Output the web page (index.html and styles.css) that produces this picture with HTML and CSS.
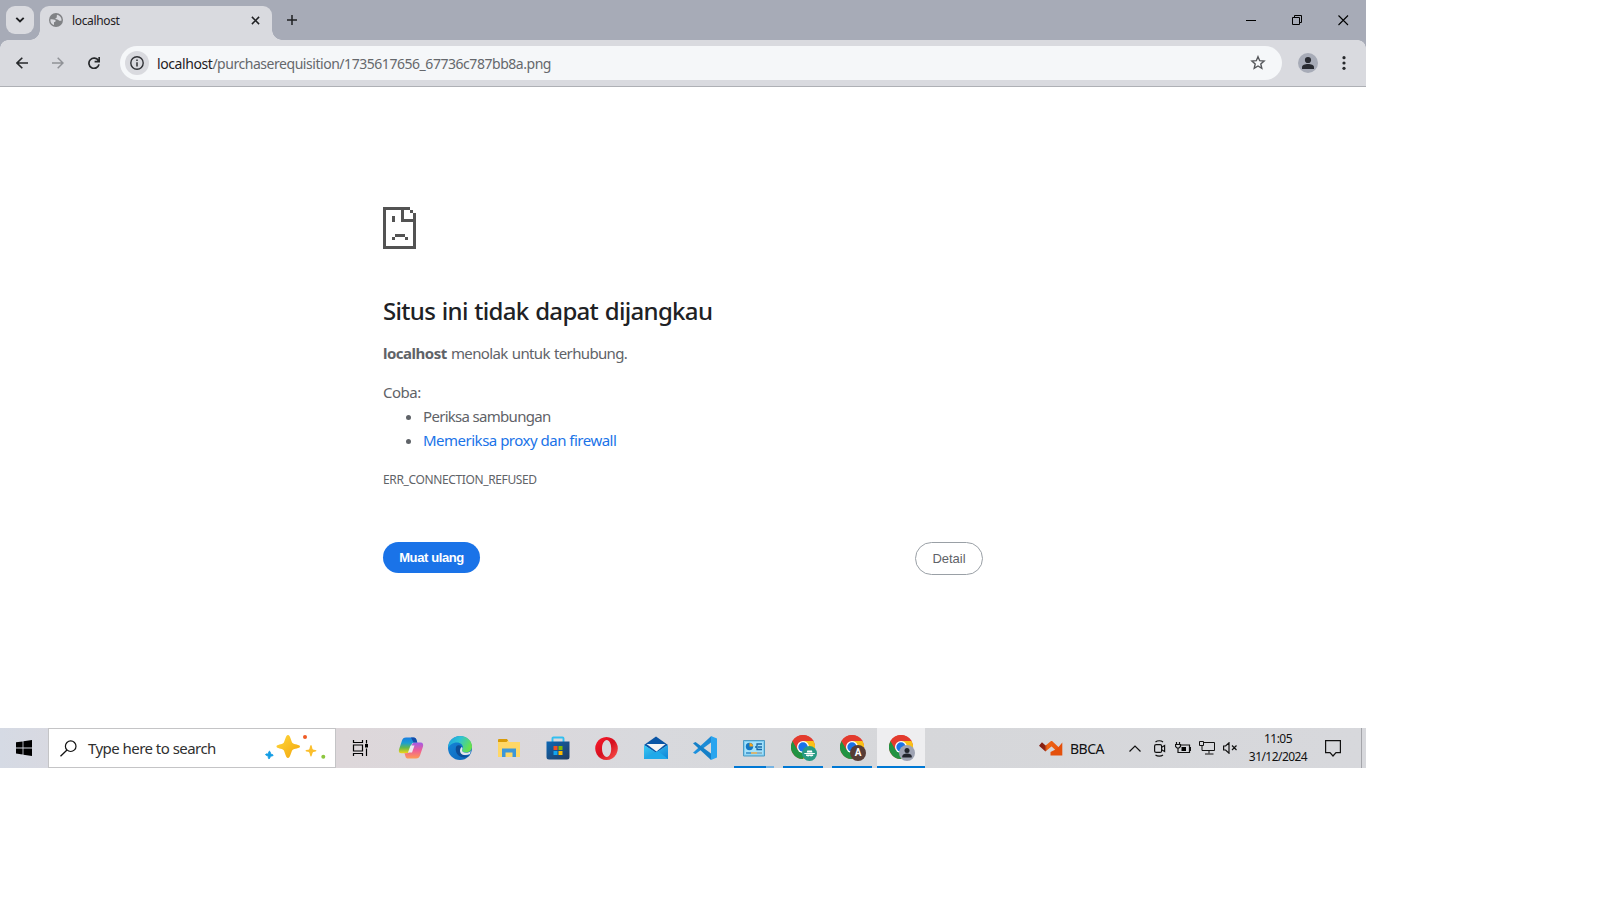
FILE: index.html
```html
<!DOCTYPE html>
<html lang="id">
<head>
<meta charset="utf-8">
<title>localhost</title>
<link rel="stylesheet" href="styles.css">
</head>
<body>
<svg class="defs" width="0" height="0">
  <defs>
    <symbol id="chrome" viewBox="0 0 24 24">
      <circle cx="12" cy="12" r="12" fill="#e33b2e"/>
      <path d="M1.600 6A12 12 0 0 0 12 24l5.200-9L12 12 6.800 15z" fill="#229342"/>
      <path d="M12 24A12 12 0 0 0 22.400 6H12l5.200 9z" fill="#fbc116"/>
      <path d="M1.600 6A12 12 0 0 1 22.400 6H12L6.800 15z" fill="#e33b2e"/>
      <circle cx="12" cy="12" r="6" fill="#fff"/>
      <circle cx="12" cy="12" r="4.700" fill="#1a73e8"/>
    </symbol>
    <linearGradient id="gold" x1="0" y1="0" x2="1" y2="1"><stop offset="0" stop-color="#ffd83b"/><stop offset="1" stop-color="#f2a50c"/></linearGradient>
    <linearGradient id="cpA" x1="0" y1="0" x2="0" y2="1"><stop offset="0" stop-color="#1a7ee0"/><stop offset=".35" stop-color="#1b9ed2"/><stop offset=".65" stop-color="#66b84a"/><stop offset="1" stop-color="#f6d516"/></linearGradient>
    <linearGradient id="cpB" x1="0" y1="0" x2="0" y2="1"><stop offset="0" stop-color="#a25be8"/><stop offset=".5" stop-color="#ee5f96"/><stop offset="1" stop-color="#ff9a52"/></linearGradient>
    <linearGradient id="edA" x1="0" y1="0" x2="1" y2=".4"><stop offset="0" stop-color="#1b9de2"/><stop offset=".5" stop-color="#2fc3d2"/><stop offset="1" stop-color="#66e04e"/></linearGradient>
    <linearGradient id="edB" x1="0" y1="0" x2="1" y2="1"><stop offset="0" stop-color="#1688da"/><stop offset="1" stop-color="#0c62b8"/></linearGradient>
    <linearGradient id="st" x1="0" y1="0" x2="1" y2="1"><stop offset="0" stop-color="#0b67b5"/><stop offset="1" stop-color="#243a5e"/></linearGradient>
    <linearGradient id="op" x1="0" y1="0" x2="1" y2="1"><stop offset="0" stop-color="#ff1b2d"/><stop offset=".5" stop-color="#d5101f"/><stop offset="1" stop-color="#ff5a4f"/></linearGradient>
    <linearGradient id="ml" x1="0" y1="0" x2="1" y2="1"><stop offset="0" stop-color="#38cbf5"/><stop offset="1" stop-color="#1182d6"/></linearGradient>
    <linearGradient id="vs" x1="0" y1="0" x2="0" y2="1"><stop offset="0" stop-color="#1c86cf"/><stop offset="1" stop-color="#1b92e0"/></linearGradient>
    <linearGradient id="bb" gradientUnits="userSpaceOnUse" x1="0" y1="0" x2="20" y2="0"><stop offset="0" stop-color="#7c1a12"/><stop offset=".28" stop-color="#8f2412"/><stop offset=".4" stop-color="#ee6415"/><stop offset="1" stop-color="#e9560f"/></linearGradient>
  </defs>
</svg>
<div class="screen">
  <header class="tabstrip">
    <button class="tab-search" aria-label="Tabs"><svg width="10" height="8" viewBox="0 0 10 8"><path d="M1.300 1.800 5 5.500 8.700 1.800" fill="none" stroke="#1f2023" stroke-width="1.900"/></svg></button>
    <div class="tab">
      <svg width="14" height="14" viewBox="0 0 14 14"><circle cx="7" cy="7" r="7" fill="#808285"/><path d="M1.500 6.200c1.800 0 4.300 0 5 1.100.7 1-.3 1.700-1.500 1.900v2.700C2.800 11.500 1 9 1.500 6.200zM8.500 1.700c2.600.8 4.300 3.200 4.100 5.800-1.200.5-2.600.5-3.200-.5-.5-.8-1.500-.5-2.500-.8-.8-.3-.4-1.300.5-1.500.9-.3.300-1.200.300-1.700 0-.6.300-1 .8-1.300z" fill="#d9dadf"/></svg>
      <span class="tab-title">localhost</span>
      <svg class="tab-close" width="9" height="9" viewBox="0 0 9 9"><path d="m.9.9 7.200 7.200M8.100.9.9 8.100" stroke="#1f2023" stroke-width="1.500"/></svg>
    </div>
    <svg class="new-tab" width="10" height="10" viewBox="0 0 10 10"><path d="M5 0v10M0 5h10" stroke="#1f2023" stroke-width="1.500"/></svg>
    <div class="window-controls">
      <svg width="11" height="11" viewBox="0 0 11 11"><path d="M0 5.500h10" stroke="#000"/></svg>
      <svg width="11" height="11" viewBox="0 0 11 11"><path d="M.5 2.500h7v7h-7zM2.500 2.500v-2h7v7h-2" fill="none" stroke="#000"/></svg>
      <svg width="11" height="11" viewBox="0 0 11 11"><path d="m.5.5 9.500 9.500m0-9.500-9.500 9.500" stroke="#000" stroke-width="1.100"/></svg>
    </div>
  </header>
  <nav class="toolbar">
    <svg width="12" height="12" viewBox="0 0 12 12"><path d="M12 6H1M6.300.7 1 6l5.300 5.300" fill="none" stroke="#26282b" stroke-width="1.600"/></svg>
    <svg width="12" height="12" viewBox="0 0 12 12"><path d="M0 6h11M5.700.7 11 6l-5.300 5.300" fill="none" stroke="#909297" stroke-width="1.500"/></svg>
    <svg width="12" height="12" viewBox="0 0 12 12"><path d="M10.400 3.600A5.100 5.100 0 1 0 11 7.400M11.200 0v4.600H6.600" fill="none" stroke="#26282b" stroke-width="1.700"/></svg>
    <div class="omnibox">
      <span class="site-info"><svg width="14" height="14" viewBox="0 0 14 14"><circle cx="7" cy="7" r="6.200" fill="none" stroke="#303236" stroke-width="1.400"/><path d="M7 6.200v4.200M7 3.400v1.500" stroke="#303236" stroke-width="1.500"/></svg></span>
      <span class="url"><b>localhost</b>/purchaserequisition/1735617656_67736c787bb8a.png</span>
      <svg class="star" width="16" height="15" viewBox="0 0 16 15"><path d="m8 1.700 1.700 4 4.400.4-3.300 2.900 1 4.300L8 11l-3.800 2.300 1-4.300L1.900 6.100l4.400-.4z" fill="none" stroke="#55575b" stroke-width="1.400"/></svg>
    </div>
    <svg class="avatar" width="20" height="20" viewBox="0 0 20 20"><circle cx="10" cy="10" r="10" fill="#a7abb7"/><circle cx="10" cy="7" r="3.100" fill="#282a30"/><path d="M4 16v-1.600C4 12 7 11 10 11s6 1 6 3.400V16z" fill="#282a30"/></svg>
    <svg class="menu" width="4" height="14" viewBox="0 0 4 14"><g fill="#26282b"><circle cx="2" cy="1.700" r="1.600"/><circle cx="2" cy="7" r="1.600"/><circle cx="2" cy="12.300" r="1.600"/></g></svg>
  </nav>
  <main class="error-page">
    <svg class="sad" width="33" height="42" viewBox="0 0 33 42" shape-rendering="crispEdges"><path fill="#535353" d="M0 0h27v3h-6v9h9V6h3v36H0zM3 3v36h27V15H18V3zM27 3h3v3h-3zM9 9h3v6H9zM12 27h10v3H12zM9 30h3v3H9zM22 30h3v3h-3z" fill-rule="evenodd"/></svg>
    <h1>Situs ini tidak dapat dijangkau</h1>
    <p class="summary"><b>localhost</b> menolak untuk terhubung.</p>
    <p class="try">Coba:</p>
    <ul>
      <li><span class="check">Periksa sambungan</span></li>
      <li><a>Memeriksa proxy dan firewall</a></li>
    </ul>
    <div class="code">ERR_CONNECTION_REFUSED</div>
    <div class="buttons">
      <button class="reload">Muat ulang</button>
      <button class="details">Detail</button>
    </div>
  </main>
  <footer class="taskbar">
    <div class="start"><svg width="16" height="16" viewBox="0 0 16 16"><path d="M0 2.300 6.600 1.400v6.100H0zM7.400 1.300 16 0v7.500H7.400zM0 8.400h6.600v6.100L0 13.600zM7.400 8.400H16V16l-8.600-1.300z"/></svg></div>
    <div class="search">
      <svg width="17" height="17" viewBox="0 0 17 17"><circle cx="10.700" cy="6.200" r="5.300" fill="none" stroke="#111" stroke-width="1.200"/><path d="m7 10-6.500 6.300" stroke="#111" stroke-width="1.300"/></svg>
      <span class="search-text">Type here to search</span>
      <svg class="sparkle" width="62" height="26" viewBox="0 0 62 26">
        <path d="M24 0c2.500 0 3 6.500 4.500 8s7.500 1.500 7.500 3.500-6 2-7.500 3.500-2 8-4.500 8-3-6.500-4.500-8-7-1.500-7-3.500 5.500-2 7-3.500 2-8 4.500-8z" fill="url(#gold)"/>
        <path d="M47 10c1 0 1 3.500 1.800 4.300s3.700.5 3.700 1.500-3 .8-3.700 1.600S48 21.500 47 21.500s-1-3.300-1.800-4.100-3.700-.6-3.700-1.600 3-.7 3.700-1.500S46 10 47 10z" fill="#fbbf2d"/>
        <path d="M5.500 16.300c1 .1.800 2.100 1.200 2.600s2.500.5 2.400 1.400-2.200.6-2.600 1-.7 2.700-1.600 2.500-.4-2.200-.8-2.700-2.700-.8-2.500-1.600 2.200-.2 2.600-.7.400-2.600 1.300-2.500z" fill="#139de5" stroke="#139de5"/>
        <circle cx="41" cy="2" r="2" fill="#ef5b25"/><circle cx="59.300" cy="21.700" r="2" fill="#8cc63e"/>
      </svg>
    </div>
    <div class="task-view"><svg width="17" height="16" viewBox="0 0 17 16"><path d="M1.500 0v2.500h9V0M1.500 16v-2.500h9V16M1.500 5h9v6h-9zM14.500 0v3.500M14.500 8.500V16" fill="none" stroke="#000" stroke-width="1.200"/><path d="M13 4h3v3.500h-3z"/></svg></div>
    <div class="app"><svg width="26" height="22" viewBox="0 0 26 22"><path d="M8 .5h7.500c2 0 2.500 1 3 2.500l.8 2.500h-2.500c-2 0-3 .8-3.500 2.500l-2 6c-.6 1.700-1.300 2.300-3 2.300H3.500C1 16.300.5 14.500 1 12.500l3-9C4.700 1.500 5.600.5 8 .5z" fill="url(#cpA)"/><path d="M18 21.500h-7.500c-2 0-2.600-.6-3-2l-1-3.200h2c2 0 3-.8 3.500-2.500l2-6c.6-1.700 1.500-2.300 3-2.300h5.500c2.500 0 3 1.800 2.500 4l-3 9c-.7 2-1.700 3-4 3z" fill="url(#cpB)"/><path d="M12.500 8.500h4l-2.500 7h-4z" fill="#eceaf0"/><path d="M13 .5h2.500c2 0 2.500 1 3 2.500l.8 2.500h-3.800z" fill="#154ca8"/></svg></div>
    <div class="app"><svg width="24" height="24" viewBox="0 0 24 24"><circle cx="12" cy="12" r="12" fill="url(#edB)"/><path d="M0 12C0 5 5.500 0 12 0c7 0 12 5 12 10.500 0 3.700-2.800 6-6 6-2.500 0-4-1-4-2 0-.8 1-1.200 1-3C15 9 12.500 6.500 9 6.500 4.500 6.500 1.500 9 0 12z" fill="url(#edA)"/><path d="M8.500 10c-2 4 0 9.500 5 11 3 1 6.500.3 8.500-2-3.500 1.500-8 .5-9.500-3-1-2.300 0-4 1-5.500C12 9 9.800 8.800 8.500 10z" fill="#0d4d96"/><path d="M14 11c1.200 1.300 0 2.700 0 3.500 0 1.200 1.500 2.200 4 2.200 2 0 3.600-.6 4.800-1.800l-.8 3c-3.500 2-8.800 1.500-9.800-2-.7-2.300.7-4.500 1.800-4.900z" fill="#e4e5ea"/></svg></div>
    <div class="app"><svg width="22" height="20" viewBox="0 0 22 20"><path d="M0 2h10l1 2h11v15H0z" fill="#ffd766"/><path d="M0 1.500 1 1h8l1 1.500L8.500 4H0z" fill="#d99b08"/><path d="M4 10.500h14V19h-3.500v-4.500h-7V19H4z" fill="#3d97d9"/></svg></div>
    <div class="app"><svg width="24" height="24" viewBox="0 0 24 24"><path d="M6.500 7V2.500Q6.500 1.500 7.500 1.500h9q1 0 1 1V7" fill="none" stroke="#32bff0" stroke-width="1.900"/><path d="M.5 5.500h23V21a2.500 2.500 0 0 1-2.500 2.500H3A2.500 2.500 0 0 1 .5 21z" fill="url(#st)"/><path d="M7.500 10h4v4h-4z" fill="#f25022"/><path d="M12.500 10h4v4h-4z" fill="#7fba00"/><path d="M7.500 15h4v4h-4z" fill="#13a4ee"/><path d="M12.500 15h4v4h-4z" fill="#ffb900"/></svg></div>
    <div class="app"><svg width="23" height="23" viewBox="0 0 23 23"><path d="M11.500 0a11.300 11.500 0 1 0 .01 0zm.3 3c2.500 0 4.400 3.600 4.400 8.500s-1.900 8.500-4.400 8.500-4.800-3.600-4.800-8.500 2.300-8.500 4.800-8.500z" fill="url(#op)" fill-rule="evenodd"/></svg></div>
    <div class="app"><svg width="24" height="24" viewBox="0 0 24 24"><path d="M0 9 12 .5 24 9l-12 8z" fill="#0a55a5"/><path d="M0 9l12 7.500L24 9v14H0z" fill="url(#ml)"/><path d="M0 23 14 15l10 8z" fill="#1fa9ea"/><path d="M2.500 8h19L12.500 15.500z" fill="#f5f4f4"/></svg></div>
    <div class="app"><svg width="24" height="24" viewBox="0 0 24 24"><path d="M0 16.700 18 .3V6.500L2.500 18z" fill="url(#vs)"/><path d="m0 7.300 2.500-1.300L18 17.500V24z" fill="#1580c8"/><path d="m18 0 6 2.500v19L18 24z" fill="#2aa5ef"/></svg></div>
    <div class="app running short"><svg width="22" height="17" viewBox="0 0 22 17"><path d="M.5.500h21v15.500H.5z" fill="#80cdf2" stroke="#4b9bc4"/><path d="M2 2h18v12.500H2z" fill="#a5e1fa"/><circle cx="6.500" cy="6.500" r="3.700" fill="#1377c4"/><path d="M6.500 6.500V3a3.600 3.600 0 0 1 3.600 3.500z" fill="#f6a51d"/><path d="M12 7h2V4h5M14 7v2.500h5M15 7h4" stroke="#1769a8" fill="none" stroke-width="1.300"/><path d="M3 13h5" stroke="#1673b7" stroke-width="1.200"/><path d="M8 13h6" stroke="#f6981d" stroke-width="1.200"/><path d="M14 13h5" stroke="#6b8695"/></svg></div>
    <div class="app running"><svg class="profile" width="26" height="26" viewBox="0 0 26 26"><use href="#chrome" width="24" height="24"/><circle cx="18.500" cy="18.500" r="7.500" fill="#279a83"/><path d="M16.300 15.500h4.600l.6 2h-5.800zM13.300 18h10.500v1H13.300zM15 19.500h7.200v1.200l-2.200.8-1.400-.8-1.400.8-2.200-.8z" fill="#fff"/></svg></div>
    <div class="app running"><svg class="profile" width="26" height="26" viewBox="0 0 26 26"><use href="#chrome" width="24" height="24"/><circle cx="18" cy="18" r="8" fill="#573c35"/><text class="badge" x="18" y="21.200" text-anchor="middle">A</text></svg></div>
    <div class="app running active"><svg class="profile" width="26" height="26" viewBox="0 0 26 26"><use href="#chrome" width="24" height="24"/><circle cx="18" cy="18" r="8" fill="#9ea3b3"/><circle cx="18" cy="15.500" r="2.500" fill="#22252d"/><path d="M13.300 22.500v-1.200c0-1.800 2.200-2.700 4.700-2.700s4.700.9 4.700 2.700v1.200z" fill="#22252d"/></svg></div>
    <div class="stock"><svg width="24" height="15" viewBox="0 0 24 15"><path d="M1.500 3 6.500 7.500 12.500 2.500 19 8.500" fill="none" stroke="url(#bb)" stroke-width="4.400"/><path d="M23.300 1.500V14.500H11.500V11l4-2 4-3z" fill="#e4500c"/></svg><span class="ticker">BBCA</span></div>
    <div class="tray">
      <svg class="chev" width="12" height="7" viewBox="0 0 12 7"><path d="m.5 6.500 5.500-5.500 5.500 5.500" fill="none" stroke="#111" stroke-width="1.200"/></svg>
      <svg class="cam" width="12" height="17" viewBox="0 0 12 17"><rect x=".6" y="4.600" width="7" height="7.800" rx="1.500" fill="none" stroke="#111" stroke-width="1.200"/><path d="M7.600 7.200 10.600 5.500v6L7.600 9.800M1.500 2C3.500.300 7 .300 9 2M1.500 15c2 1.500 5.500 1.500 7.500 0" fill="none" stroke="#111" stroke-width="1.200"/></svg>
      <svg class="bat" width="16" height="12" viewBox="0 0 16 12"><path d="M6 3h8.500v7.500h-9M14.500 5.500h1v3h-1M1.500 0v2.500M4.500 0v2.500M.5 2.500h5v2l-1.500 1.500h-2L.5 4.500zM3 6v4.500h3" fill="none" stroke="#111" stroke-width="1.200"/><path d="M6.500 5h4.500v4H6.500z"/></svg>
      <svg class="net" width="16" height="14" viewBox="0 0 16 14"><path d="M5 1.500h10.500v8H3V5M10 9.500v3M6 13h8.500M.5.500h4v4h-4z" fill="none" stroke="#111"/></svg>
      <svg class="vol" width="14" height="12" viewBox="0 0 14 12"><path d="M.6 4h2L6 .8v10.400L2.600 8h-2zM9 3.500l4.500 4.500M13.500 3.500 9 8" fill="none" stroke="#111" stroke-width="1.200"/></svg>
    </div>
    <div class="clock"><span class="time">11:05</span><span class="date">31/12/2024</span></div>
    <svg class="notify" width="16" height="17" viewBox="0 0 16 17"><path d="M.6.600h14.800v12H11L8 16l-3-3.400H.6z" fill="none" stroke="#111" stroke-width="1.200"/></svg>
    <div class="show-desktop"></div>
  </footer>
</div>
</body>
</html>
```
FILE: styles.css
```css
* { box-sizing: border-box; }
body { margin: 0; background: #fff; font-family: "Noto Sans", "Open Sans", sans-serif; }
button { font-family: inherit; padding: 0; border: 0; }
svg { display: block; flex: none; }
.defs { position: absolute; }
.screen { width: 1366px; height: 768px; display: flex; flex-direction: column; white-space: nowrap; }

.tabstrip { height: 40px; background: #a7abb7; display: flex; align-items: center; }
.tab-search { width: 28px; height: 28px; margin-left: 6px; border-radius: 9px; background: #d9dadf; display: flex; align-items: center; justify-content: center; }
.tab { position: relative; align-self: flex-end; width: 232px; height: 34px; margin-left: 6px; padding: 0 12px 6px 9px; background: #d9dadf; border-radius: 9px 9px 0 0; display: flex; align-items: center; }
.tab::before, .tab::after { content: ""; position: absolute; bottom: 0; width: 10px; height: 10px; }
.tab::before { left: -10px; background: radial-gradient(circle at 0 0, transparent 9.5px, #d9dadf 10px); }
.tab::after { right: -10px; background: radial-gradient(circle at 100% 0, transparent 9.5px, #d9dadf 10px); }
.tab-title { margin-left: 9px; padding-top: 1px; font-size: 12px; letter-spacing: -.35px; color: #1f2023; }
.tab-close { margin-left: auto; }
.new-tab { margin-left: 15px; }
.window-controls { margin-left: auto; margin-right: 17px; display: flex; gap: 35px; }

.toolbar { height: 47px; padding: 0 20px 1px 16px; display: flex; align-items: center; gap: 24px; border-bottom: 1px solid #aeb0b5; background: radial-gradient(circle at 8px 8px, #d9dadf 7.5px, #a7abb7 8px) 0 0 / 8px 8px no-repeat, radial-gradient(circle at 0 8px, #d9dadf 7.5px, #a7abb7 8px) 100% 0 / 8px 8px no-repeat, #d9dadf; }
.omnibox { width: 1162px; height: 34px; margin-left: -4px; padding: 0 16px 0 5px; border-radius: 17px; background: #f5f7f9; display: flex; align-items: center; }
.site-info { width: 24px; height: 24px; border-radius: 50%; background: #d9dadf; display: flex; align-items: center; justify-content: center; }
.url { margin-left: 8px; padding-top: 1px; font-size: 14px; color: #65686c; letter-spacing: -.46px; }
.url b { font-weight: 400; color: #1f2023; letter-spacing: -.42px; }
.star { margin-left: auto; }
.avatar { margin-left: -8px; }
.menu { margin-left: auto; }

.error-page { width: 600px; height: 641px; margin: 0 auto; padding-top: 120px; color: #5f6368; font-size: 15px; line-height: 24px; letter-spacing: -.5px; }
.error-page h1 { margin: 44px 0 0; font-size: 24px; font-weight: 500; line-height: 36px; letter-spacing: -.68px; word-spacing: 1px; color: #202124; }
.error-page p { margin: 0; }
.error-page .summary { margin-top: 12px; letter-spacing: -.65px; word-spacing: 1px; }
.error-page .summary b { letter-spacing: -.5px; }
.error-page .try { margin-top: 15px; }
.error-page ul { margin: 0; padding-left: 40px; }
.error-page a { color: #1a73e8; }
.check { letter-spacing: -.7px; }
.code { margin-top: 16px; font-size: 12px; letter-spacing: -.37px; }
.buttons { margin-top: 50px; display: flex; justify-content: space-between; align-items: flex-start; }
.buttons button { font-family: "Liberation Sans", Arial, sans-serif; font-size: 13px; }
.reload { width: 97px; height: 31px; border-radius: 16px; background: #1a73e8; color: #fff; font-weight: 700; letter-spacing: -.4px; }
.buttons .details { width: 68px; height: 33px; border-radius: 17px; background: #fff; border: 1px solid #9aa0a6; color: #5f6368; }

.taskbar { height: 40px; display: flex; align-items: center; background: linear-gradient(90deg, #d5dae4 0, #d8d9e1 48px, #ddd7da 340px, #dbd8dc 500px, #d8d9dd 650px, #d6d7da 900px, #d7d8dc 100%); }
.start { width: 48px; display: flex; justify-content: center; }
.search { width: 288px; height: 40px; padding: 0 9px 0 11px; border: 1px solid #c4c4c6; background: #fff; display: flex; align-items: center; }
.search-text { margin-left: 11px; font-size: 15px; letter-spacing: -.54px; color: #303030; }
.sparkle { margin-left: auto; }
.task-view { width: 50px; padding-right: 1px; display: flex; justify-content: center; }
.app { width: 49px; height: 40px; position: relative; display: flex; align-items: center; justify-content: center; }
.profile { margin-left: 3px; }
.running::after { content: ""; position: absolute; left: 5px; bottom: 0; width: 40px; height: 2px; background: #0078d4; }
.short::after { background: linear-gradient(90deg, #0078d4 32px, #76b3e2 32px); }
.active { width: 48px; margin-left: 1px; background: #eeeef0; }
.active .profile { margin-left: 2px; }
.active::after { left: 0; width: 48px; }
.badge { font: 700 10px Roboto, sans-serif; fill: #fff; }
.stock { margin-left: 114px; width: 90px; display: flex; align-items: center; gap: 7px; font-size: 14px; letter-spacing: -.5px; color: #111; }
.tray { width: 108px; display: flex; align-items: center; }
.cam { margin-left: 13px; }
.bat { margin-left: 9px; }
.net { margin-left: 8px; }
.vol { margin-left: 8px; }
.clock { width: 82px; display: flex; flex-direction: column; align-items: center; font-size: 12px; line-height: 18px; letter-spacing: -.55px; color: #111; }
.notify { margin-left: 6px; }
.show-desktop { margin-left: auto; width: 5px; height: 40px; border-left: 1px solid #a4a5aa; }
```
